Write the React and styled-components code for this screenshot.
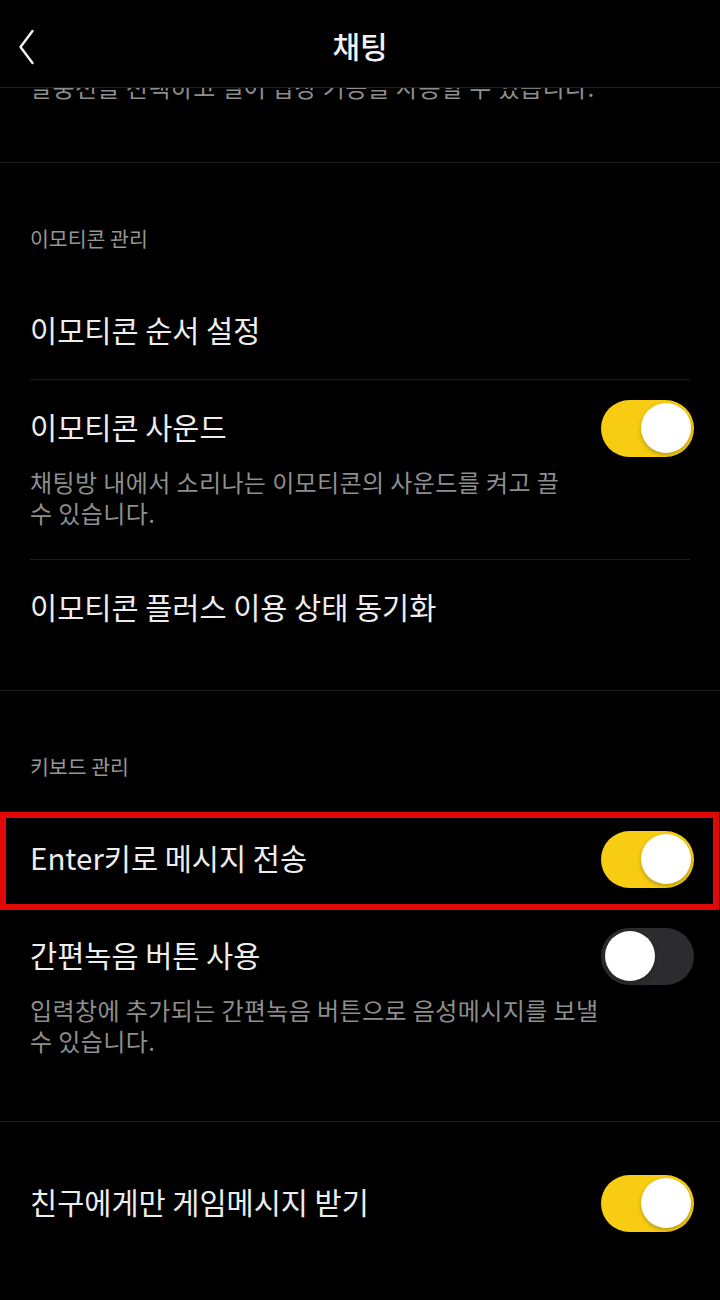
import React from "react";
import styled, { createGlobalStyle } from "styled-components";

const GlobalStyle = createGlobalStyle`
  html, body {
    margin: 0;
    padding: 0;
    background: #000;
  }
  body {
    font-family: "Noto Sans CJK KR", "Noto Sans", sans-serif;
    -webkit-font-smoothing: antialiased;
  }
`;

const Screen = styled.div`
  width: 720px;
  height: 1300px;
  background: #000;
  display: flex;
  flex-direction: column;
  overflow: hidden;
`;

const Header = styled.header`
  flex: 0 0 87px;
  display: grid;
  grid-template-columns: 80px 1fr 80px;
  align-items: center;
  border-bottom: 1px solid #1f1f1f;
  box-sizing: content-box;
`;

const BackButton = styled.button`
  background: none;
  border: 0;
  padding: 6px 0 0 14px;
  height: 87px;
  display: flex;
  align-items: center;
  cursor: pointer;
`;

const Title = styled.h1`
  margin: 0;
  padding-top: 2px;
  text-align: center;
  color: #f2f2f2;
  font-size: 30px;
  font-weight: 500;
  line-height: 1;
`;

const Viewport = styled.main`
  flex: 1;
  overflow: hidden;
`;

const Content = styled.div`
  margin-top: -17px;
`;

const Section = styled.section`
  padding: ${(p) => p.$top || 0}px 0 ${(p) => (p.$bottom == null ? 34 : p.$bottom)}px;
  border-bottom: ${(p) => (p.$last ? "none" : "1px solid #1c1c1c")};
`;

const SectionTitle = styled.h2`
  margin: 0;
  padding: 61px 30px 31px;
  color: #969696;
  font-size: 20.5px;
  font-weight: 400;
  line-height: 28px;
`;

const Row = styled.div`
  margin: 0 30px;
  padding: ${(p) => (p.$flush ? 0 : 19)}px 0
    ${(p) => (p.$flush ? 0 : p.$hasDesc ? 31 : 19)}px;
  border-bottom: ${(p) => (p.$divider ? "1px solid #1c1c1c" : "none")};
`;

const RowLine = styled.div`
  height: 58px;
  display: flex;
  align-items: center;
  justify-content: space-between;
`;

const RowLabel = styled.span`
  margin-bottom: 4px;
  color: #ededed;
  font-size: 29.5px;
  font-weight: 400;
  line-height: 36px;
`;

const Desc = styled.p`
  margin: ${(p) => (p.$flush ? 0 : "9px")} 0 0;
  color: #8e8e8e;
  font-size: 24px;
  letter-spacing: 0.4px;
  font-weight: 400;
  line-height: 31px;
  white-space: nowrap;
`;

const Highlight = styled.div`
  position: relative;
  &::after {
    content: "";
    position: absolute;
    top: 1px;
    left: 0;
    right: 1px;
    bottom: -2px;
    border: 6.5px solid #e10808;
    pointer-events: none;
  }
`;

const Track = styled.span`
  flex: 0 0 auto;
  position: relative;
  width: 93px;
  height: 57px;
  margin-right: -4px;
  border-radius: 29px;
  background: ${(p) => (p.$on ? "#f8cc12" : "#2c2c2e")};
`;

const Knob = styled.span`
  position: absolute;
  top: 3.5px;
  left: ${(p) => (p.$on ? "39.5px" : "3.5px")};
  width: 50px;
  height: 50px;
  border-radius: 50%;
  background: #fff;
  box-shadow: 0 2px 4px rgba(0, 0, 0, 0.25);
`;

const Toggle = ({ on }) => (
  <Track $on={on} role="switch" aria-checked={on}>
    <Knob $on={on} />
  </Track>
);

const Chevron = () => (
  <svg width="30" height="40" viewBox="0 0 30 40" fill="none">
    <path
      d="M18.5 4 L6.5 20 L18.5 36"
      stroke="#f2f2f2"
      strokeWidth="2.4"
      strokeLinecap="round"
      strokeLinejoin="round"
    />
  </svg>
);

const Lines = ({ lines }) =>
  lines.map((l, i) => (
    <React.Fragment key={i}>
      {i > 0 && <br />}
      {l}
    </React.Fragment>
  ));

const SettingRow = ({ label, desc, toggle, divider }) => (
  <Row $hasDesc={!!desc} $divider={divider}>
    <RowLine>
      <RowLabel>{label}</RowLabel>
      {toggle !== undefined && <Toggle on={toggle} />}
    </RowLine>
    {desc && (
      <Desc>
        <Lines lines={desc} />
      </Desc>
    )}
  </Row>
);

export default function App() {
  return (
    <>
      <GlobalStyle />
      <Screen>
        <Header>
          <BackButton aria-label="뒤로">
            <Chevron />
          </BackButton>
          <Title>채팅</Title>
          <span />
        </Header>
        <Viewport>
          <Content>
            <Section $bottom={60}>
              <Row $flush>
                <Desc $flush>말풍선을 선택하고 밀어 답장 기능을 사용할 수 있습니다.</Desc>
              </Row>
            </Section>

            <Section>
              <SectionTitle>이모티콘 관리</SectionTitle>
              <SettingRow label="이모티콘 순서 설정" divider />
              <SettingRow
                label="이모티콘 사운드"
                toggle={true}
                desc={["채팅방 내에서 소리나는 이모티콘의 사운드를 켜고 끌", "수 있습니다."]}
                divider
              />
              <SettingRow label="이모티콘 플러스 이용 상태 동기화" />
            </Section>

            <Section>
              <SectionTitle>키보드 관리</SectionTitle>
              <Highlight>
                <SettingRow label="Enter키로 메시지 전송" toggle={true} divider />
              </Highlight>
              <SettingRow
                label="간편녹음 버튼 사용"
                toggle={false}
                desc={["입력창에 추가되는 간편녹음 버튼으로 음성메시지를 보낼", "수 있습니다."]}
              />
            </Section>

            <Section $top={33} $last>
              <SettingRow label="친구에게만 게임메시지 받기" toggle={true} />
            </Section>
          </Content>
        </Viewport>
      </Screen>
    </>
  );
}
